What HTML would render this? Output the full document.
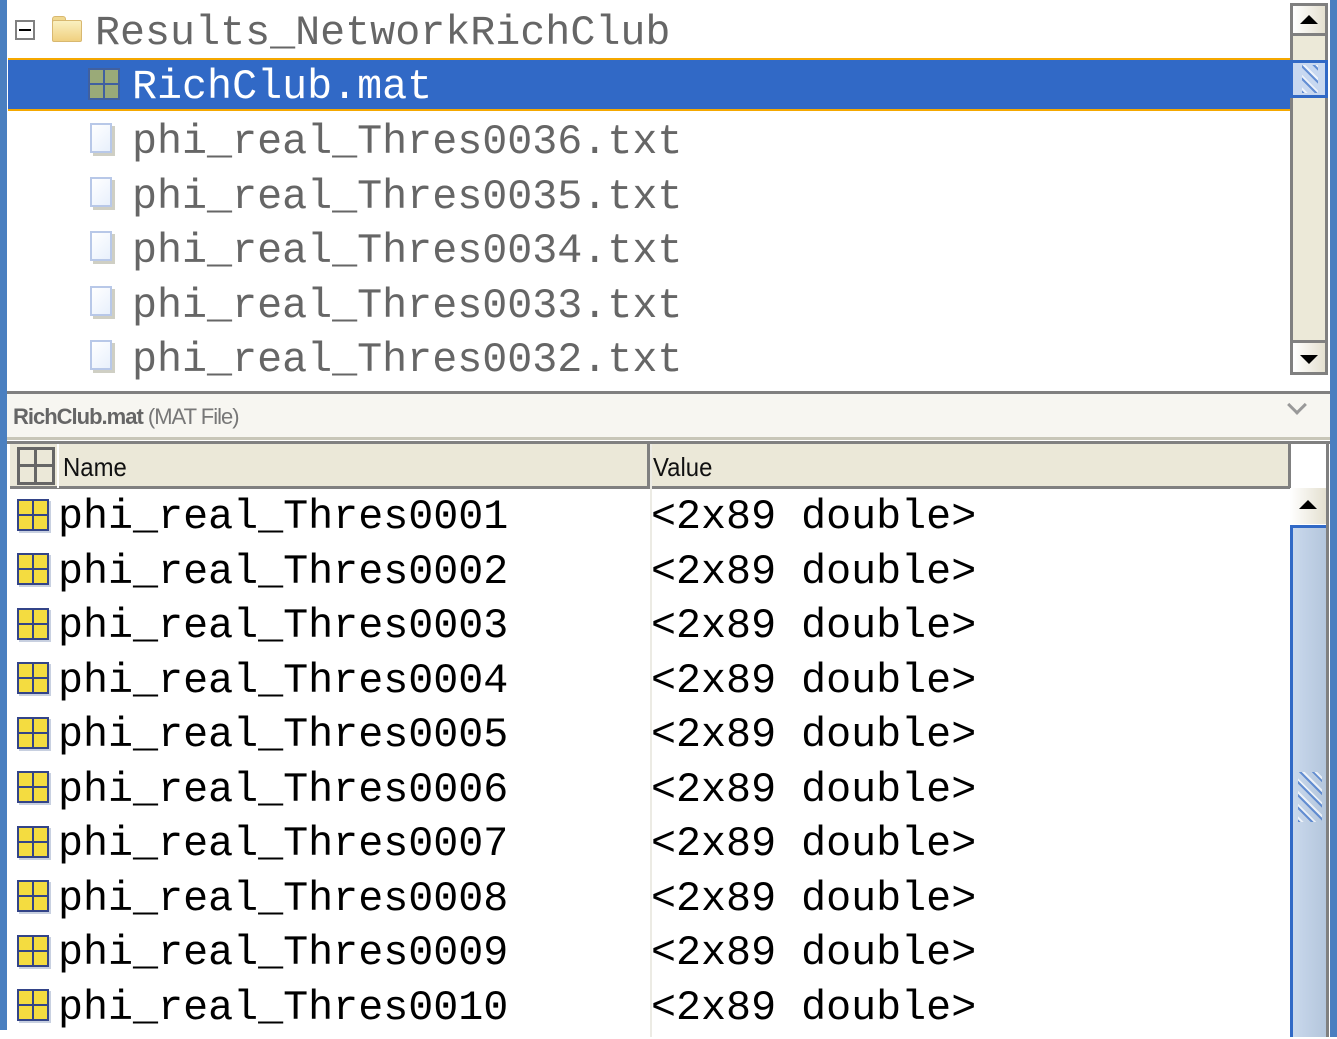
<!DOCTYPE html>
<html><head><style>
body{margin:0;width:1337px;height:1037px;overflow:hidden;background:#fff;position:relative;font-family:"Liberation Mono",monospace}
div{position:absolute;box-sizing:border-box}
.t{font-size:41.7px;line-height:54.6px;white-space:pre;height:54.6px}
.g{color:#666}
.file{width:22px;height:30px;border:2px solid #b8c8e8;background:linear-gradient(135deg,#fff,#e8f0fc);box-shadow:3px 3px 0 #cfcfc4}
.var{width:32px;height:32px;border:2px solid #334488;background:#f4dc40;box-shadow:2px 2px 0 #c8d0e0}
.var::before{content:"";position:absolute;left:13px;top:0;width:2px;height:28px;background:#334488}
.var::after{content:"";position:absolute;top:13px;left:0;height:2px;width:28px;background:#334488}
</style></head><body>
<div style="left:0;top:0;width:7px;height:1030px;background:#4a7fc0"></div>
<div style="left:1330px;top:0;width:7px;height:1037px;background:#4a7fc0"></div>
<!-- tree -->
<div style="left:15px;top:20px;width:20px;height:20px;border:2px solid #808080"></div>
<div style="left:19px;top:29px;width:12px;height:2px;background:#000"></div>
<div style="left:52px;top:16px;width:14px;height:6px;border-radius:3px 3px 0 0;background:#f0d890;border:1px solid #d8b870"></div>
<div style="left:52px;top:20px;width:30px;height:22px;border-radius:2px;background:linear-gradient(#faf0c0,#f0d080);border:1px solid #d8b870"></div>
<div class="t g" style="left:95px;top:6px">Results_NetworkRichClub</div>
<div style="left:8px;top:58px;width:1284px;height:53px;background:#3169c6;border-top:2px solid #f5a800;border-bottom:2px solid #f5a800"></div>
<div style="left:88px;top:68px;width:32px;height:32px;background:#9aaa78;border:2px solid #4060a0"></div>
<div style="left:103px;top:68px;width:2px;height:32px;background:#4060a0"></div>
<div style="left:88px;top:83px;width:32px;height:2px;background:#4060a0"></div>
<div class="t" style="left:132px;top:60px;color:#fff">RichClub.mat</div>
<div class="file" style="left:90px;top:123px"></div><div class="t g" style="left:132px;top:115px">phi_real_Thres0036.txt</div>
<div class="file" style="left:90px;top:177px"></div><div class="t g" style="left:132px;top:170px">phi_real_Thres0035.txt</div>
<div class="file" style="left:90px;top:231px"></div><div class="t g" style="left:132px;top:224px">phi_real_Thres0034.txt</div>
<div class="file" style="left:90px;top:286px"></div><div class="t g" style="left:132px;top:279px">phi_real_Thres0033.txt</div>
<div class="file" style="left:90px;top:340px"></div><div class="t g" style="left:132px;top:333px">phi_real_Thres0032.txt</div>
<!-- top scrollbar -->
<div style="left:1290px;top:3px;width:38px;height:372px;background:#ece9d8;border:3px solid #808080"></div>
<div style="left:1293px;top:6px;width:32px;height:30px;background:linear-gradient(90deg,#fff,#e4e0d0);border-bottom:3px solid #808080"></div>
<div style="left:1300px;top:15px;width:0;height:0;border-left:9px solid transparent;border-right:9px solid transparent;border-bottom:9px solid #000"></div>
<div style="left:1290px;top:60px;width:38px;height:38px;background:#c8d8f0;border:3px solid #3169c6"></div>
<div style="left:1293px;top:340px;width:32px;height:32px;background:linear-gradient(90deg,#fff,#e4e0d0);border-top:3px solid #808080"></div>
<div style="left:1300px;top:355px;width:0;height:0;border-left:9px solid transparent;border-right:9px solid transparent;border-top:9px solid #000"></div>
<div style="left:7px;top:391px;width:1323px;height:3px;background:#808080"></div>
<!-- info bar -->
<div style="left:7px;top:394px;width:1323px;height:46px;background:#f7f6f1;border-bottom:3px solid #c8c6b8"></div>
<div style="left:13px;top:404px;font-family:'Liberation Sans',sans-serif;font-size:22px;color:#777;letter-spacing:-1px"><b style="color:#666">RichClub.mat</b> (MAT File)</div>
<div style="left:1290px;top:398px;width:14px;height:14px;border-right:3px solid #999;border-bottom:3px solid #999;transform:rotate(45deg)"></div>
<!-- header -->
<div style="left:7px;top:441px;width:1323px;height:3px;background:#808080"></div>
<div style="left:10px;top:444px;width:1280px;height:45px;background:#ebe8d8;border-bottom:3px solid #808080"></div>
<div style="left:1288px;top:444px;width:3px;height:44px;background:#808080"></div>
<div style="left:1326px;top:444px;width:3px;height:593px;background:#808080"></div>
<div style="left:17px;top:447px;width:38px;height:38px;border:3px solid #666"></div>
<div style="left:34px;top:447px;width:3px;height:38px;background:#666"></div>
<div style="left:17px;top:464px;width:38px;height:3px;background:#666"></div>
<div style="left:57px;top:444px;width:2px;height:44px;background:#fff"></div>
<div style="left:647px;top:444px;width:3px;height:44px;background:#808080"></div>
<div style="left:650px;top:444px;width:2px;height:593px;background:#ecebe4"></div>
<div style="left:63px;top:452px;font-family:'Liberation Sans',sans-serif;font-size:26px;color:#111;transform:scaleX(.92);transform-origin:left">Name</div>
<div style="left:653px;top:452px;font-family:'Liberation Sans',sans-serif;font-size:26px;color:#111;transform:scaleX(.92);transform-origin:left">Value</div>
<!-- rows -->
<div style="left:7px;top:490px;width:1283px;height:549px">
<div class="var" style="left:10px;top:9px"></div><div class="t" style="left:51px;top:0">phi_real_Thres0001</div><div class="t" style="left:644px;top:0">&lt;2x89 double&gt;</div>
<div class="var" style="left:10px;top:63px"></div><div class="t" style="left:51px;top:54.5px">phi_real_Thres0002</div><div class="t" style="left:644px;top:54.5px">&lt;2x89 double&gt;</div>
<div class="var" style="left:10px;top:118px"></div><div class="t" style="left:51px;top:109px">phi_real_Thres0003</div><div class="t" style="left:644px;top:109px">&lt;2x89 double&gt;</div>
<div class="var" style="left:10px;top:172px"></div><div class="t" style="left:51px;top:163.5px">phi_real_Thres0004</div><div class="t" style="left:644px;top:163.5px">&lt;2x89 double&gt;</div>
<div class="var" style="left:10px;top:227px"></div><div class="t" style="left:51px;top:218px">phi_real_Thres0005</div><div class="t" style="left:644px;top:218px">&lt;2x89 double&gt;</div>
<div class="var" style="left:10px;top:281px"></div><div class="t" style="left:51px;top:272.5px">phi_real_Thres0006</div><div class="t" style="left:644px;top:272.5px">&lt;2x89 double&gt;</div>
<div class="var" style="left:10px;top:336px"></div><div class="t" style="left:51px;top:327px">phi_real_Thres0007</div><div class="t" style="left:644px;top:327px">&lt;2x89 double&gt;</div>
<div class="var" style="left:10px;top:390px"></div><div class="t" style="left:51px;top:381.5px">phi_real_Thres0008</div><div class="t" style="left:644px;top:381.5px">&lt;2x89 double&gt;</div>
<div class="var" style="left:10px;top:445px"></div><div class="t" style="left:51px;top:436px">phi_real_Thres0009</div><div class="t" style="left:644px;top:436px">&lt;2x89 double&gt;</div>
<div class="var" style="left:10px;top:499px"></div><div class="t" style="left:51px;top:490.5px">phi_real_Thres0010</div><div class="t" style="left:644px;top:490.5px">&lt;2x89 double&gt;</div>
</div>
<!-- bottom scrollbar -->
<div style="left:1290px;top:488px;width:36px;height:36px;background:linear-gradient(90deg,#fff,#e4e0d0)"></div>
<div style="left:1299px;top:500px;width:0;height:0;border-left:9px solid transparent;border-right:9px solid transparent;border-bottom:9px solid #000"></div>
<div style="left:1290px;top:525px;width:36px;height:512px;background:linear-gradient(90deg,#c9d8ec,#b4c6dc);border-left:3px solid #3169c6;border-top:3px solid #3169c6"></div>
<div style="left:1298px;top:772px;width:24px;height:50px;background:repeating-linear-gradient(45deg,#3a70c8 0 2px,#fff 2px 4px,transparent 4px 9px);opacity:.7"></div>
<div style="left:1302px;top:65px;width:16px;height:28px;background:repeating-linear-gradient(45deg,#3a70c8 0 2px,#fff 2px 4px,transparent 4px 9px);opacity:.7"></div>
</body></html>
